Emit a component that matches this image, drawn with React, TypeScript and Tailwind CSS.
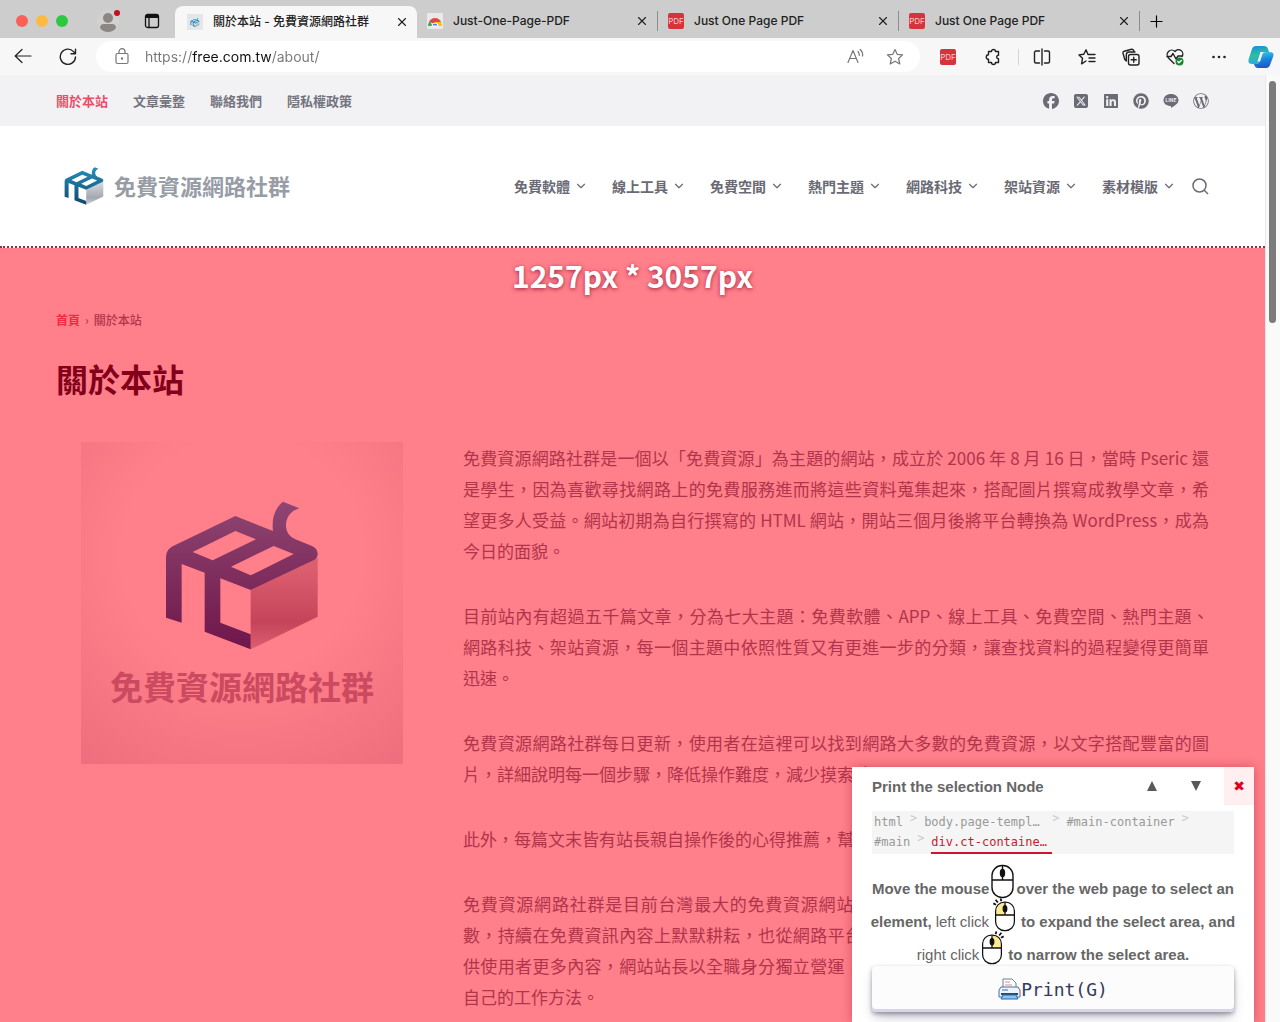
import { ChevronDown, Plus, X } from 'lucide-react'
import { FaFacebook, FaLinkedin, FaPinterest, FaSquareXTwitter, FaWordpressSimple } from 'react-icons/fa6'
import { ReactNode } from 'react'

interface TabInterface {
  title: string
  icon: ReactNode
  active?: boolean
}

const topLinks = ['文章彙整', '聯絡我們', '隱私權政策']

const menu = ['免費軟體', '線上工具', '免費空間', '熱門主題', '網路科技', '架站資源', '素材模版']

const paragraphs = [
  '免費資源網路社群是一個以「免費資源」為主題的網站，成立於 2006 年 8 月 16 日，當時 Pseric 還是學生，因為喜歡尋找網路上的免費服務進而將這些資料蒐集起來，搭配圖片撰寫成教學文章，希望更多人受益。網站初期為自行撰寫的 HTML 網站，開站三個月後將平台轉換為 WordPress，成為今日的面貌。',
  '目前站內有超過五千篇文章，分為七大主題：免費軟體、APP、線上工具、免費空間、熱門主題、網\u2060路科技、架站資源，每一個主題中依照性質又有更進一步的分類，讓查找資料的過程變得更簡單迅速。',
  '免費資源網路社群每日更新，使用者在這裡可以找到網路大多數的免費資源，以文字搭配豐富的圖片，詳細說明每一個步驟，降低操作難度，減少摸索時間。',
  '此外，每篇文末皆有站長親自操作後的心得推薦，幫助',
  '免費資源網路社群是目前台灣最大的免費資源網站，累積超過五千篇教學文章與相當多的瀏覽人數，持續在免費資訊內容上默默耕耘，也從網路平台延伸至電子報、社群與影音等多元的管道，提供使用者更多內容，網站站長以全職身分獨立營運，以分享實用工具與資訊為志，並且發展出屬於自己的工作方法。',
]

const CubeLogo = ({ id, top, bottom, face, faceEnd, className }: {
  id: string
  top: string
  bottom: string
  face: string
  faceEnd: string
  className: string
}) => (
  <svg viewBox="260 185 460 447" className={className} aria-hidden="true">
    <defs>
      <linearGradient id={`${id}-frame`} x1="0" y1="0" x2="0" y2="1">
        <stop offset="0" stopColor={top} />
        <stop offset="1" stopColor={bottom} />
      </linearGradient>
      <linearGradient id={`${id}-face`} x1="0" y1="0" x2="0" y2="1">
        <stop offset="0.1" stopColor={face} />
        <stop offset="0.7" stopColor={faceEnd} />
        <stop offset="1" stopColor={face} />
      </linearGradient>
    </defs>
    <path d="M516 452 717 356V532L516 630Z" fill={`url(#${id}-face)`} />
    <path
      fillRule="evenodd"
      fill={`url(#${id}-frame)`}
      d="M262 535V352Q262 331 282 321L470 230 583 275C578 235 590 205 613 187L662 207C635 215 621 235 622 262Q624 288 650 300L700 320Q717 328 717 343 717 356 706 362L516 452 425 417V550L516 585V630L378 577V400L309 374V550ZM342 338 402 363 532 300 470 275ZM457 382 516 408 645 344 585 320Z"
    />
  </svg>
)

const PdfIcon = () => (
  <span className="flex h-4 w-4 shrink-0 items-center justify-center rounded-xs bg-[#d7333c] text-[8px] leading-none text-[#ffc9cc]">
    PDF
  </span>
)

const Tab = ({ title, icon, active }: TabInterface) => (
  <div
    className={
      active
        ? 'flex h-8 w-[242px] shrink-0 items-center self-end rounded-t-lg bg-[#f7f7f7] pr-2 pl-3'
        : 'flex h-5 w-[241px] shrink-0 items-center border-r border-[#8d8d8d] pr-2 pl-[10px]'
    }
  >
    {icon}
    <span className="ml-[10px] flex-1 truncate text-[12px] font-medium text-[#222]">{title}</span>
    <button aria-label={`Close ${title}`} className="flex">
      <X size={14} strokeWidth={2} className="text-[#222]" />
    </button>
  </div>
)

const TabBar = () => (
  <div className="flex h-[38px] items-center bg-[#cdcdcd] pt-1">
    <div className="flex w-[175px] shrink-0 items-center">
      <span className="ml-4 flex gap-2">
        <i className="h-3 w-3 rounded-full bg-[#fb5f57]" />
        <i className="h-3 w-3 rounded-full bg-[#fcbb40]" />
        <i className="h-3 w-3 rounded-full bg-[#2bc840]" />
      </span>
      <button aria-label="Profile" className="ml-7">
        <svg width="24" height="24" viewBox="0 0 24 24">
          <circle cx="12" cy="12" r="11" fill="#d3d1cf" />
          <circle cx="12" cy="9" r="5" fill="#8b8784" />
          <path d="M4 19Q4 15 8 15H16Q20 15 20 19 17 23 12 23 7 23 4 19Z" fill="#8b8784" />
          <circle cx="21" cy="4" r="3" fill="#c50f1f" />
        </svg>
      </button>
      <button aria-label="Tab actions" className="ml-6">
        <svg width="16" height="16" viewBox="0 0 16 16" fill="none" stroke="#111" strokeWidth="1.3">
          <rect x="1.5" y="1.5" width="13" height="13" rx="2" />
          <path d="M5 5V14" />
          <path d="M1.5 3.5H14.5" strokeWidth="3" />
        </svg>
      </button>
    </div>
    <Tab
      active
      title="關於本站 - 免費資源網路社群"
      icon={
        <span className="flex h-4 w-4 shrink-0 items-center justify-center bg-[#e3e7ea]">
          <CubeLogo id="tab" top="#2c9bd0" bottom="#1d6f9c" face="#cfd4d9" faceEnd="#aeb4ba" className="h-[9px] w-[10px]" />
        </span>
      }
    />
    <Tab
      title="Just-One-Page-PDF"
      icon={
        <svg width="16" height="16" viewBox="0 0 16 16" className="shrink-0">
          <rect width="16" height="16" rx="1" fill="#e9e9e9" />
          <path d="M2 9Q4 5 8 5T14 9L8 11Z" fill="#dc4a41" />
          <path d="M1 13Q1 10 2.500 8.500L6 13Z" fill="#34a853" />
          <path d="M8 9H14Q15 11 15 13H10Z" fill="#fbc116" />
          <path d="M5 13A3 3 0 0 1 11 13Z" fill="#4285f4" stroke="#fff" />
        </svg>
      }
    />
    <Tab title="Just One Page PDF" icon={<PdfIcon />} />
    <Tab title="Just One Page PDF" icon={<PdfIcon />} />
    <button aria-label="New tab" className="ml-[7px]">
      <Plus size={19} strokeWidth={1.5} />
    </button>
  </div>
)

const iconProps = {
  width: 18,
  height: 18,
  viewBox: '0 0 18 18',
  fill: 'none',
  stroke: 'currentColor',
  strokeWidth: 1.2,
  strokeLinecap: 'round' as const,
  strokeLinejoin: 'round' as const,
}

const Toolbar = () => (
  <div className="flex h-[37px] items-center bg-[#f7f7f7] text-[#222]">
    <button aria-label="Back" className="ml-[14px]">
      <svg {...iconProps}><path d="M17 8H1.500M8 1.500 1.200 8 8 14.500" /></svg>
    </button>
    <button aria-label="Reload" className="ml-[27px]">
      <svg {...iconProps} strokeWidth={1.4}><path d="M16.5 9A7.6 7.6 0 1 1 14.5 3.6L16.3 5.6M16.5 1.2V5.7H12" /></svg>
    </button>
    <div className="ml-[19px] flex h-[31px] flex-1 items-center rounded-full bg-white pr-4 pl-[17px] text-[#777]">
      <svg {...iconProps}>
        <rect x="3" y="5.500" width="12" height="10" rx="1.5" />
        <path d="M6 5.500V3.700A3 3 0 0 1 12 3.700V5.500" />
        <circle cx="9" cy="10.500" r="0.6" fill="currentColor" />
      </svg>
      <input
        aria-label="Address"
        defaultValue="https://free.com.tw/about/"
        className="ml-[14px] min-w-0 flex-1 bg-[linear-gradient(90deg,#777_47px,#111_47px,#111_126px,#777_126px)] bg-clip-text text-[14px] text-transparent outline-none"
      />
      <button aria-label="Read aloud">
        <svg {...iconProps}><path d="M1 14.500 6 2.500 11 14.500M2.800 10.500H9.200M11 3.500Q12.500 5 12.300 7.500M13.200 1.500Q16 4 15.600 8" /></svg>
      </button>
      <button aria-label="Add to favorites" className="ml-[21px]">
        <svg {...iconProps}>
          <path d="M9 1.5 11.2 6.3 16.6 6.9 12.6 10.5 13.8 16 9 13.2 4.2 16 5.4 10.5 1.4 6.9 6.8 6.3Z" />
        </svg>
      </button>
    </div>
    <div className="flex shrink-0 items-center pl-5">
      <button aria-label="Just One Page PDF"><PdfIcon /></button>
      <button aria-label="Extensions" className="ml-7">
        <svg {...iconProps} strokeWidth={1.4}>
          <path d="M5.500 3.500H7.500A2 2 0 0 1 11.500 3.500H14.500V7.200A1.700 1.700 0 1 0 14.500 10.800V14.500H11.500A2 2 0 0 1 7.500 14.500H4.500V11.300A2.200 2.200 0 0 1 4.500 6.800V3.500Z" />
        </svg>
      </button>
      <i className="ml-4 h-4 w-px bg-[#d5d5d5]" />
      <button aria-label="Split screen" className="ml-[14px]">
        <svg {...iconProps} strokeWidth={1.4}><path d="M9 1V17M6.5 3H3A1.5 1.5 0 0 0 1.500 4.500V13.500A1.500 1.500 0 0 0 3 15H6.500M11.500 3H15A1.500 1.500 0 0 1 16.500 4.500V13.500A1.500 1.500 0 0 1 15 15H11.500" /></svg>
      </button>
      <button aria-label="Favorites" className="ml-[27px]">
        <svg {...iconProps} strokeWidth={1.4}><path d="M11.500 6.500H10L8 1.800 5.800 6.200 1 6.900 4.500 10.300 3.600 15.800 8 13M11.500 6.500H17M11 10H17M11 13.500H17" /></svg>
      </button>
      <button aria-label="Collections" className="ml-[26px]">
        <svg {...iconProps} strokeWidth={1.4}>
          <rect x="6.500" y="6.500" width="10.500" height="10.500" rx="2" />
          <path d="M11.750 9.200V14.300M9.200 11.750H14.300M4.300 13 2.800 11.500 1 5.200Q.7 3.600 2.200 3.200L9.500 1.200Q11.200 1 11.700 2.500L12 3.700M4.300 12.500V7Q4.300 4 7 4H13" />
        </svg>
      </button>
      <button aria-label="Browser essentials" className="ml-[26px]">
        <svg {...iconProps} strokeWidth={1.4}>
          <path d="M8 15.500 2.500 10A4.200 4.200 0 0 1 9 3.500 4.200 4.200 0 0 1 16 8.500M1 8.500H5L7 5.500 10 11 12 8H16.500" />
          <circle cx="13.500" cy="13.500" r="4" fill="#13862d" stroke="none" />
          <path d="M11.800 13.500 13 14.700 15.300 12.400" stroke="#fff" />
        </svg>
      </button>
      <button aria-label="Settings and more" className="ml-[26px]">
        <svg {...iconProps} fill="currentColor" stroke="none">
          <circle cx="3.500" cy="9" r="1.300" />
          <circle cx="9" cy="9" r="1.300" />
          <circle cx="14.500" cy="9" r="1.300" />
        </svg>
      </button>
      <button aria-label="Copilot" className="mr-[6px] ml-[20px]">
        <svg width="26" height="24" viewBox="0 0 26 24">
          <defs>
            <linearGradient id="cp-a" x1="0.3" y1="0" x2="0.5" y2="1">
              <stop offset="0" stopColor="#1c8fe0" />
              <stop offset="0.5" stopColor="#2bbf9f" />
              <stop offset="1" stopColor="#2fa8e6" />
            </linearGradient>
            <linearGradient id="cp-b" x1="0.3" y1="0" x2="0.5" y2="1">
              <stop offset="0" stopColor="#35c9ee" />
              <stop offset="0.5" stopColor="#1b83dc" />
              <stop offset="1" stopColor="#1c57c4" />
            </linearGradient>
          </defs>
          <path d="M8 1H16Q19 1 20 4L21 7H17Q15 7 14 10L12 16Q11 19 8 19H4Q-1 19 1 13L4 4Q5 1 8 1Z" fill="url(#cp-a)" />
          <path d="M18 23H10Q7 23 6 19H8Q11 19 12 16L14 10Q15 7 18 7H21Q27 7 25 12L22 20Q21 23 18 23Z" fill="url(#cp-b)" />
          <path d="M12.500 7H16Q14.500 8 14 10L12 16.500H9.500Z" fill="#f7f7f7" />
        </svg>
      </button>
    </div>
  </div>
)

const TopBar = () => (
  <div className="flex h-[51px] items-center justify-between bg-[#f2f2f5] px-14 text-[13px] font-bold text-[#74747e]">
    <nav className="flex gap-[25px]">
      <a href="#about" className="text-[#e8506a]">關於本站</a>
      {topLinks.map((link) => (
        <a key={link} href={`#${link}`}>{link}</a>
      ))}
    </nav>
    <div className="flex items-center gap-[14px] text-[16px] text-[#6b6b75]">
      <a href="#facebook" aria-label="Facebook"><FaFacebook /></a>
      <a href="#x" aria-label="X"><FaSquareXTwitter /></a>
      <a href="#linkedin" aria-label="LinkedIn"><FaLinkedin /></a>
      <a href="#pinterest" aria-label="Pinterest"><FaPinterest /></a>
      <a href="#line" aria-label="LINE">
        <svg width="16" height="16" viewBox="0 0 16 16">
          <path d="M8 1C12.300 1 15.500 3.700 15.500 7.200 15.500 10.300 12 12.500 8 15V13C3.700 13 .5 10.600 .5 7.200 .5 3.700 3.700 1 8 1Z" fill="#6b6b75" />
          <text x="8" y="9" textAnchor="middle" fontSize="5" fill="#f2f2f5">LINE</text>
        </svg>
      </a>
      <a href="#wordpress" aria-label="WordPress"><FaWordpressSimple /></a>
    </div>
  </div>
)

const SiteHeader = () => (
  <header className="flex h-[120px] items-center justify-between bg-white px-14">
    <a href="#home" className="flex items-center gap-[10px] pl-2">
      <CubeLogo id="site" top="#2490bd" bottom="#12476b" face="#d3d5da" faceEnd="#a3a6b0" className="h-[38px] w-10" />
      <span className="pb-[2px] text-[22px] font-bold text-[#979ca6]">免費資源網路社群</span>
    </a>
    <nav className="flex items-center gap-6 text-[14px] font-bold text-[#6a6a74]">
      {menu.map((item) => (
        <a key={item} href={`#${item}`} className="flex items-center gap-1">
          {item}
          <ChevronDown size={14} strokeWidth={2} />
        </a>
      ))}
      <button aria-label="Search" className="-ml-2">
        <svg width="17" height="17" viewBox="0 0 17 17" fill="none" stroke="currentColor" strokeWidth="1.500">
          <circle cx="7.500" cy="7.500" r="6.500" />
          <path d="M12 12 16 16" />
        </svg>
      </button>
    </nav>
  </header>
)

const Mouse = ({ click, className }: { click?: 'left' | 'right'; className: string }) => (
  <svg viewBox="0 0 26 38" className={className} fill="none" stroke="#111" strokeWidth="1.400" aria-hidden="true">
    {click && (
      <g transform={click === 'right' ? 'translate(26 0) scale(-1 1)' : undefined}>
        <path d="M13 5Q4 5 3 19H13Z" fill="#ffeb8a" stroke="none" />
        <path d="M0 6 3 7.500M2.500 2 5 5M8 .5 9 3.500" strokeWidth="2" />
      </g>
    )}
    <rect x="2.500" y="4.500" width="21" height="32" rx="10" />
    <path d="M2.500 19H23.500M13 5V19" />
    <ellipse cx="13" cy="12" rx="2" ry="3.500" fill="#111" />
  </svg>
)

const Crumb = ({ children, className }: { children: string; className?: string }) => (
  <a href="#node" className={className}>{children}</a>
)

const Arrow = () => <span className="-mt-1 text-[#ccc]">&gt;</span>

const PrintPanel = () => (
  <aside className="absolute right-[11px] bottom-0 h-[255px] w-[402px] bg-white font-['Liberation_Sans',sans-serif] text-[#666] shadow-[0_0_10px_rgba(150,20,40,0.4)]">
    <div className="flex h-[38px] items-center pl-5">
      <h2 className="flex-1 pt-[2px] text-[15px] font-bold">Print the selection Node</h2>
      <button aria-label="Expand selection" className="w-11">
        <svg width="10" height="10" viewBox="0 0 10 10" className="mx-auto"><path d="M5 0 10 10H0Z" fill="#595959" /></svg>
      </button>
      <button aria-label="Narrow selection" className="w-11">
        <svg width="10" height="10" viewBox="0 0 10 10" className="mx-auto"><path d="M0 0H10L5 10Z" fill="#595959" /></svg>
      </button>
      <button aria-label="Close" className="ml-[6px] flex h-[38px] w-[30px] items-center justify-center bg-[#ffeff0] font-['DejaVu_Sans',sans-serif] text-[14px] text-[#e0001b]">
        ✖
      </button>
    </div>
    <div className="mx-5 mt-[6px] h-[43px] bg-[#f5f5f5] px-[2px] font-['DejaVu_Sans_Mono',monospace] text-[12px] leading-[20px] text-[#999]">
      <div className="flex gap-[7px] pt-px">
        <Crumb>html</Crumb>
        <Arrow />
        <Crumb className="w-[121px]">body.page-templ…</Crumb>
        <Arrow />
        <Crumb>#main-container</Crumb>
        <Arrow />
      </div>
      <div className="flex gap-[7px]">
        <Crumb>#main</Crumb>
        <Arrow />
        <Crumb className="w-[121px] border-b-2 border-[#d01430] text-[#d01430]">div.ct-containe…</Crumb>
      </div>
    </div>
    <div className="mt-[18px] text-center text-[15px] leading-[33px] font-bold">
      <p className="flex h-[33px] items-end justify-center">
        Move the mouse <Mouse className="mb-[6px] h-[38px] w-[27px] shrink-0" /> over the web page to select an
      </p>
      <p className="flex h-[33px] items-end justify-center">
        element,<span className="mx-1 font-normal">left click</span>
        <Mouse click="left" className="mb-[6px] h-[34px] w-6 shrink-0" />
        <span className="ml-1">to expand the select area, and</span>
      </p>
      <p className="flex h-[33px] items-end justify-center">
        <span className="mr-px font-normal">right click</span>
        <Mouse click="right" className="mb-[6px] h-[34px] w-6 shrink-0" />
        <span className="ml-1">to narrow the select area.</span>
      </p>
    </div>
    <button className="relative mx-5 -mt-[5px] flex h-[46px] w-[362px] items-center justify-center rounded-sm bg-[#fcfcfd] font-['DejaVu_Sans_Mono',monospace] text-[18px] text-[#36395a] shadow-[0_2px_4px_rgba(45,35,66,0.4),0_7px_13px_-3px_rgba(45,35,66,0.3),inset_0_-3px_0_#d6d6e7]">
      <svg width="23" height="22" viewBox="0 0 23 22" aria-hidden="true">
        <path d="M5 10V1H14L18 5V10Z" fill="#fff" stroke="#6f7f96" />
        <path d="M7 4H12M7 7H14" stroke="#e08d85" />
        <path d="M3 9H20L22 12V19H1V12Z" fill="#eef3fa" stroke="#45709f" />
        <path d="M4 12H10" stroke="#45709f" />
        <path d="M3 15H20V17H3Z" fill="#1f4c80" />
        <path d="M5 17H18L20 21H3Z" fill="#8ec3ee" stroke="#2d69a5" />
      </svg>
      Print(G)
    </button>
  </aside>
)

const Article = () => (
  <main className="min-h-0 flex-1 overflow-hidden border-t-2 border-dotted border-[#8f2f48] bg-[#ff7f8a] bg-clip-padding px-14 text-[#b0344a]">
    <p className="mt-[7px] text-center text-[30px] leading-[40px] font-bold text-white [text-shadow:0_1px_4px_#a02040]">
      1257px * 3057px
    </p>
    <nav className="mt-[15px] flex gap-[5px] text-[12px] leading-[20px] font-medium">
      <a href="#home" className="font-bold text-[#f4283f]">首頁</a>
      <span>›</span>
      <span>關於本站</span>
    </nav>
    <h1 className="mt-[24px] text-[32px] leading-[48px] font-bold text-[#83001a]">關於本站</h1>
    <div className="mt-[40px] flex items-start">
      <figure className="ml-[25px] flex h-[322px] w-[322px] shrink-0 flex-col items-center bg-[radial-gradient(circle_at_50%_35%,#ff7f8a_45%,#ee6e7d_100%)] pt-[59px]">
        <CubeLogo id="about" top="#8f4672" bottom="#6f164a" face="#dc5f70" faceEnd="#c54459" className="h-[149px] w-[154px]" />
        <figcaption className="mt-[12px] text-[33px] leading-[48px] font-bold text-[#cb4a60]">免費資源網路社群</figcaption>
      </figure>
      <div className="ml-[60px] flex flex-1 flex-col gap-[34px] text-justify text-[17px] leading-[31px]">
        {paragraphs.map((text) => (
          <p key={text}>{text}</p>
        ))}
      </div>
    </div>
  </main>
)

const App = () => (
  <div className="flex h-screen flex-col overflow-hidden bg-[#f7f7f7] font-[Inter,'Noto_Sans_CJK_TC',sans-serif]">
    <TabBar />
    <Toolbar />
    <div className="flex min-h-0 flex-1" lang="zh-Hant">
      <div className="relative flex min-w-0 flex-1 flex-col overflow-hidden bg-white font-['Noto_Sans_CJK_TC',sans-serif]">
        <TopBar />
        <SiteHeader />
        <Article />
        <PrintPanel />
      </div>
      <div className="w-[15px] border-l border-[#e8e8e8] bg-[#fafafa] pt-[6px] pl-[3px]">
        <div className="h-[242px] w-[7px] rounded-full bg-[#7b7b7b]" />
      </div>
    </div>
  </div>
)

export default App
